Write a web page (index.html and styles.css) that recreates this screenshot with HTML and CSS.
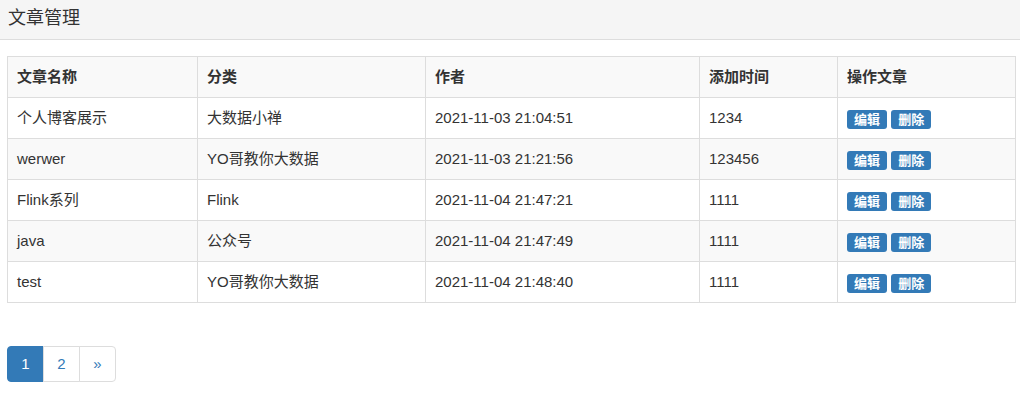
FILE: index.html
```html
<!DOCTYPE html>
<html lang="zh-CN">
<head>
<meta charset="utf-8">
<title>文章管理</title>
<link rel="stylesheet" href="styles.css">
</head>
<body>
<div class="page-header">文章管理</div>
<div class="content">
  <table class="data-table">
    <colgroup>
      <col class="c1"><col class="c2"><col class="c3"><col class="c4"><col class="c5">
    </colgroup>
    <tbody>
      <tr class="head"><th>文章名称</th><th>分类</th><th>作者</th><th>添加时间</th><th>操作文章</th></tr>
      <tr><td>个人博客展示</td><td>大数据小禅</td><td>2021-11-03 21:04:51</td><td>1234</td><td><span class="btn">编辑</span> <span class="btn">删除</span></td></tr>
      <tr><td>werwer</td><td>YO哥教你大数据</td><td>2021-11-03 21:21:56</td><td>123456</td><td><span class="btn">编辑</span> <span class="btn">删除</span></td></tr>
      <tr><td>Flink系列</td><td>Flink</td><td>2021-11-04 21:47:21</td><td>1111</td><td><span class="btn">编辑</span> <span class="btn">删除</span></td></tr>
      <tr><td>java</td><td>公众号</td><td>2021-11-04 21:47:49</td><td>1111</td><td><span class="btn">编辑</span> <span class="btn">删除</span></td></tr>
      <tr><td>test</td><td>YO哥教你大数据</td><td>2021-11-04 21:48:40</td><td>1111</td><td><span class="btn">编辑</span> <span class="btn">删除</span></td></tr>
    </tbody>
  </table>
  <ul class="pagination">
    <li class="active"><a>1</a></li>
    <li><a>2</a></li>
    <li><a>&raquo;</a></li>
  </ul>
</div>
</body>
</html>
```

FILE: styles.css
```css
html, body {
  margin: 0;
  padding: 0;
  background: #fff;
}
body {
  font-family: "Liberation Sans", Arial, "Noto Sans CJK SC", sans-serif;
  font-size: 15px;
  color: #333;
}
.page-header {
  background: #f5f5f5;
  border-bottom: 1px solid #ddd;
  height: 39px;
  line-height: 36px;
  padding-left: 8px;
  font-size: 18px;
  color: #333;
}
.content {
  padding: 16px 5px 0 7px;
}
.data-table {
  width: 1008px;
  border-collapse: collapse;
  table-layout: fixed;
  border: 1px solid #ddd;
}
.c1 { width: 190px; }
.c2 { width: 228px; }
.c3 { width: 274px; }
.c4 { width: 138px; }
.c5 { width: 178px; }
.data-table th,
.data-table td {
  border: 1px solid #ddd;
  padding: 10px 9px;
  line-height: 20px;
  height: 20px;
  text-align: left;
  vertical-align: middle;
  white-space: nowrap;
}
.data-table th {
  font-weight: bold;
}
.data-table tr:nth-of-type(odd) {
  background: #f9f9f9;
}
.btn {
  display: inline-block;
  background: #337ab7;
  color: #fff;
  font-size: 13px;
  font-weight: bold;
  line-height: 19px;
  height: 19px;
  padding: 0 7px;
  border-radius: 3px;
  vertical-align: top;
  position: relative;
  top: 2px;
}
.pagination {
  list-style: none;
  margin: 43px 0 0 0;
  padding: 0;
  display: flex;
}
.pagination li a {
  display: block;
  width: 35px;
  height: 34px;
  line-height: 34px;
  text-align: center;
  border: 1px solid #ddd;
  margin-left: -1px;
  color: #337ab7;
  background: #fff;
  font-size: 15px;
}
.pagination li:first-child a {
  margin-left: 0;
  border-radius: 4px 0 0 4px;
}
.pagination li:last-child a {
  border-radius: 0 4px 4px 0;
}
.pagination li.active a {
  background: #337ab7;
  border-color: #337ab7;
  color: #fff;
}
```
